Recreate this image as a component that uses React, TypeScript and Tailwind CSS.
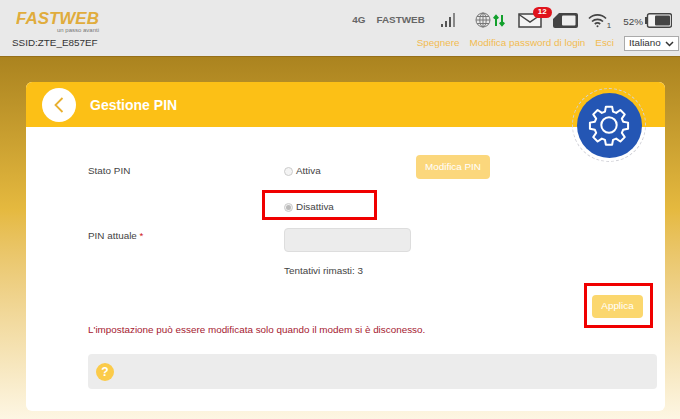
const sans = "font-['Liberation_Sans',Arial,sans-serif]";

function SignalIcon() {
	return (
		<svg width="16" height="16" viewBox="0 0 16 16" className="text-[#555]">
			<rect x="1" y="12" width="2" height="3" fill="currentColor" />
			<rect x="5" y="9" width="2" height="6" fill="currentColor" />
			<rect x="9" y="5" width="2" height="10" fill="currentColor" />
			<rect x="13" y="1" width="2" height="14" fill="#888" />
		</svg>
	);
}

function GlobeIcon() {
	return (
		<svg width="16" height="16" viewBox="0 0 16 16" fill="none" stroke="#777" strokeWidth="1">
			<circle cx="8" cy="8" r="7" />
			<ellipse cx="8" cy="8" rx="3.2" ry="7" />
			<path d="M8 1v14M1 8h14M2 4.5h12M2 11.500h12" />
		</svg>
	);
}

function ArrowsIcon() {
	return (
		<svg width="12" height="13" viewBox="0 0 12 13" fill="none" stroke="#12a02c" strokeWidth="2">
			<path d="M3 12V2M.8 4.500 3 1.800l2.200 2.700" />
			<path d="M9 1v10M6.800 8.500 9 11.200l2.200-2.700" />
		</svg>
	);
}

function MailIcon() {
	return (
		<svg width="24" height="15" viewBox="0 0 24 15" fill="none" stroke="#444" strokeWidth="1.500">
			<rect x="1" y="1" width="22" height="13" fill="#f4f4f4" />
			<path d="M1 1.500 12 9l11-7.500" />
		</svg>
	);
}

function SimIcon() {
	return (
		<svg width="25" height="15" viewBox="0 0 25 15">
			<path d="M6 0h17a2 2 0 0 1 2 2v11a2 2 0 0 1-2 2H2a2 2 0 0 1-2-2V6z" fill="#444" />
			<rect x="9" y="2.500" width="13.500" height="10" rx="1" fill="#eee" />
		</svg>
	);
}

function WifiIcon() {
	return (
		<svg width="19" height="15" viewBox="0 0 19 15" fill="none" stroke="#444" strokeWidth="1.700">
			<path d="M1 5.500a12 12 0 0 1 17 0" />
			<path d="M4 8.500a8 8 0 0 1 11 0" />
			<path d="M6.800 11a4 4 0 0 1 5.400 0" />
			<circle cx="9.500" cy="13.300" r="1" fill="#444" stroke="none" />
		</svg>
	);
}

function BatteryIcon() {
	return (
		<svg width="27" height="15" viewBox="0 0 27 15">
			<rect x="0" y="4" width="2.500" height="7" fill="#444" />
			<rect x="2.500" y="0.700" width="24" height="13.600" rx="2" fill="#f4f4f4" stroke="#444" strokeWidth="1.400" />
			<rect x="10" y="2.500" width="15" height="10" rx="1" fill="#444" />
		</svg>
	);
}

function GearIcon() {
	return (
		<svg width="44" height="44" viewBox="0 0 24 24" fill="none" stroke="white" strokeWidth="1.100" strokeLinejoin="round">
			<path d="M10.300 2h3.400l.5 2.700 1.700.7 2.300-1.600 2.400 2.400-1.600 2.300.7 1.700 2.700.5v3.400l-2.700.5-.7 1.700 1.600 2.300-2.400 2.400-2.300-1.600-1.700.7-.5 2.700h-3.400l-.5-2.700-1.700-.7-2.300 1.600-2.400-2.400 1.600-2.300-.7-1.700-2.700-.5v-3.400l2.700-.5.7-1.700-1.600-2.300 2.400-2.400 2.300 1.600 1.700-.7z" />
			<circle cx="12" cy="12" r="4.200" />
		</svg>
	);
}

export default function App() {
	return (
		<div className={`${sans} h-[419px] w-[680px] overflow-hidden bg-gradient-to-b from-[#967012] via-[#e5b93f] to-[#fdf6e3] text-[9.9px] text-[#444]`}>
			<header className="flex h-[57px] justify-between border-b border-[#96701a] bg-[#e9e9e9]">
				<div className="pl-3 pt-[11px]">
					<div className="relative ml-1 h-[21px] w-[83px]">
						<span className="block origin-left scale-x-[1.06] text-[16px] leading-[16px] font-bold italic text-[#e0ac3c]">FASTWEB</span>
						<span className="absolute right-0 top-[16px] text-[6px] leading-[6px] text-[#777]">un passo avanti</span>
					</div>
					<div className="mt-[5px] leading-3 text-[#333]">SSID:ZTE_E857EF</div>
				</div>
				<div className="flex flex-col items-end pr-px pt-2">
					<div className="flex h-[24px] items-center pr-[7px]">
						<span className="mr-[11px] font-bold text-[#666]">4G</span>
						<span className="mr-[15px] font-bold text-[#666]">FASTWEB</span>
						<span className="mr-[19px]"><SignalIcon /></span>
						<span className="mr-0.5"><GlobeIcon /></span>
						<span className="mr-[13px]"><ArrowsIcon /></span>
						<span className="relative mr-[11px]">
							<MailIcon />
							<span className="absolute -right-2.5 -top-1.5 flex h-[11px] w-[19px] items-center justify-center rounded-full bg-[#e0141c] text-[8px] font-bold text-white">12</span>
						</span>
						<span className="mr-2.5"><SimIcon /></span>
						<WifiIcon />
						<span className="mr-3 self-end pb-0.5 text-[8px] leading-[9px]">1</span>
						<span className="mr-0.5 mt-1">52%</span>
						<BatteryIcon />
					</div>
					<div className="mt-1 flex items-center text-[#f2bb50]">
						<span className="mr-2.5">Spegnere</span>
						<span className="mr-2.5">Modifica password di login</span>
						<span className="mr-2.5">Esci</span>
						<span className="flex h-[15px] w-[55px] items-center justify-between border border-[#aaa] bg-white pl-1 pr-1 text-[#333]">
							Italiano
							<svg width="9" height="6" viewBox="0 0 9 6" fill="none" stroke="#333" strokeWidth="1.500"><path d="M1 1l3.500 3.500L8 1" /></svg>
						</span>
					</div>
				</div>
			</header>

			<main className="ml-[26px] mt-[25px] h-[329px] w-[639px]">
				<div className="relative h-full rounded-md bg-white">
					<div className="flex h-[45px] items-center rounded-t-md bg-[#fcc016] pl-4">
						<div className="flex h-[34px] w-[34px] items-center justify-center rounded-full bg-white">
							<svg width="14" height="18" viewBox="0 0 14 18" fill="none" stroke="#e8b030" strokeWidth="1.800"><path d="M10.500 2 3.500 9l7 7" /></svg>
						</div>
						<h1 className="ml-[14px] text-sm font-bold text-white">Gestione PIN</h1>
					</div>

					<div className="absolute left-[546px] top-[6px] flex h-[74px] w-[74px] items-center justify-center rounded-full border border-dashed border-[#d2d2d8]">
						<div className="flex h-[65px] w-[65px] items-center justify-center rounded-full bg-[#2456b4]">
							<GearIcon />
						</div>
					</div>

					<div className="pl-[62px] pr-2">
						<div className="mt-[36px] grid grid-cols-[196px_1fr]">
							<span className="leading-4">Stato PIN</span>
							<div className="flex">
								<label className="flex h-4 w-[132px] items-center">
									<span className="h-[9px] w-[9px] rounded-full border border-[#ccc] bg-[#f4f4f4]" />
									<span className="ml-[3px]">Attiva</span>
								</label>
								<button className="-mt-2 h-6 w-[74px] rounded-sm bg-[#fbd77c] text-white">Modifica PIN</button>
							</div>
							<span className="col-start-2 mt-5 flex h-4 items-center">
								<span className="flex h-[9px] w-[9px] items-center justify-center rounded-full border border-[#ccc] bg-[#f0f0f0]">
									<span className="h-[5px] w-[5px] rounded-full bg-[#bbb]" />
								</span>
								<span className="ml-[3px]">Disattiva</span>
							</span>
							<span className="mt-[13px] leading-4">PIN attuale <span className="text-[#d02020]">*</span></span>
							<div className="mt-[13px] h-6 w-[127px] rounded-sm border border-[#ddd] bg-[#ececec]" />
							<span className="col-start-2 mt-[11px] leading-4">Tentativi rimasti: 3</span>
						</div>

						<div className="mt-4 flex justify-end pr-[14px]">
							<button className="h-[23px] w-[51px] rounded-sm bg-[#fbd76e] text-white">Applica</button>
						</div>
						<p className="mt-1.5 leading-3 text-[#a52030]">L'impostazione può essere modificata solo quando il modem si è disconesso.</p>
						<div className="mt-[18px] flex h-[35px] items-center rounded-sm bg-[#ececec] pl-2">
							<span className="flex h-[18px] w-[18px] items-center justify-center rounded-full bg-[#fbcb4a] text-xs font-bold text-white">?</span>
						</div>
					</div>

					<div className="absolute left-[236px] top-[108px] h-[30px] w-[115px] border-[3px] border-[#f00000]" />
					<div className="absolute left-[558px] top-[201px] h-[45px] w-[69px] border-[3px] border-[#f00000]" />
				</div>
			</main>
		</div>
	);
}
